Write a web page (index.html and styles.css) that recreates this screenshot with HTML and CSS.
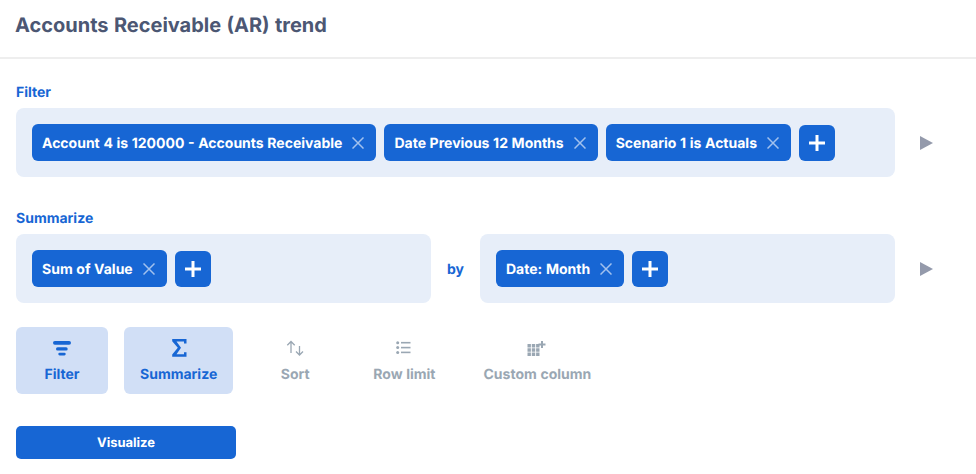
FILE: index.html
```html
<!DOCTYPE html>
<html lang="en">
<head>
<meta charset="utf-8">
<title>Accounts Receivable (AR) trend</title>
<link rel="stylesheet" href="styles.css">
</head>
<body>
<header class="header"><h1 class="title">Accounts Receivable (AR) trend</h1></header>
<main class="content">
  <section class="section">
    <div class="label">Filter</div>
    <div class="row">
      <div class="panel">
        <div class="chip"><span>Account 4 is 120000 - Accounts Receivable</span><svg class="x" viewBox="0 0 12 12"><path d="M.5.5l11 11M11.500.5l-11 11"/></svg></div>
        <div class="chip"><span>Date Previous 12 Months</span><svg class="x" viewBox="0 0 12 12"><path d="M.5.5l11 11M11.500.5l-11 11"/></svg></div>
        <div class="chip"><span>Scenario 1 is Actuals</span><svg class="x" viewBox="0 0 12 12"><path d="M.5.5l11 11M11.500.5l-11 11"/></svg></div>
        <div class="add"><svg class="plus" viewBox="0 0 16 16"><path d="M8 0v16M0 8h16"/></svg></div>
      </div>
      <svg class="run" viewBox="0 0 13 14"><path d="M0 0l13 7-13 7z"/></svg>
    </div>
  </section>
  <section class="section summarize">
    <div class="label">Summarize</div>
    <div class="row">
      <div class="panel half">
        <div class="chip"><span>Sum of Value</span><svg class="x" viewBox="0 0 12 12"><path d="M.5.5l11 11M11.500.5l-11 11"/></svg></div>
        <div class="add"><svg class="plus" viewBox="0 0 16 16"><path d="M8 0v16M0 8h16"/></svg></div>
      </div>
      <div class="by">by</div>
      <div class="panel half">
        <div class="chip"><span>Date: Month</span><svg class="x" viewBox="0 0 12 12"><path d="M.5.5l11 11M11.500.5l-11 11"/></svg></div>
        <div class="add"><svg class="plus" viewBox="0 0 16 16"><path d="M8 0v16M0 8h16"/></svg></div>
      </div>
      <svg class="run" viewBox="0 0 13 14"><path d="M0 0l13 7-13 7z"/></svg>
    </div>
  </section>
  <div class="tools">
    <div class="tool active">
      <svg class="ticon" viewBox="0 0 20 20"><rect x="1" y="3" width="18" height="3.700" rx="1.850"/><rect x="4" y="9.300" width="11.700" height="3.200" rx="1.600"/><rect x="6.300" y="14.700" width="7.400" height="2.700" rx="1.350"/></svg>
      <span>Filter</span>
    </div>
    <div class="tool active">
      <svg class="ticon" viewBox="0 0 20 20"><path d="M3.200 1H17.500V5.500H15V3.500H7.500L12 9.800 7.500 16.200H15V14.200H17.500V18.700H3.200V16.500L8.800 9.800 3.200 3.200z"/></svg>
      <span>Summarize</span>
    </div>
    <div class="tool">
      <svg class="ticon line" viewBox="0 0 20 20"><path d="M6 15V3.500M2.300 7.200L6 3.500l3.700 3.700M14.500 8V17M11 13.500l3.500 3.500 3.500-3.500"/></svg>
      <span>Sort</span>
    </div>
    <div class="tool">
      <svg class="ticon" viewBox="0 0 20 20"><circle cx="3.700" cy="4.700" r="1.500"/><circle cx="3.700" cy="9.600" r="1.500"/><circle cx="3.700" cy="14.400" r="1.500"/><rect x="7" y="3.900" width="9.500" height="1.600"/><rect x="7" y="8.800" width="9.500" height="1.600"/><rect x="7" y="13.600" width="9.500" height="1.600"/></svg>
      <span>Row limit</span>
    </div>
    <div class="tool">
      <svg class="ticon" viewBox="0 0 20 20"><path d="M.5 6h3.400v3.400H.5zM4.800 6h3.400v3.400H4.800zM9.100 6h3.400v3.400H9.100zM.5 10.300h3.400v3.400H.5zM4.800 10.300h3.400v3.400H4.800zM9.100 10.300h3.400v3.400H9.100zM.5 14.600h3.400V18H.5zM4.800 14.600h3.400V18H4.800zM9.100 14.600h3.400V18H9.100z"/><path d="M14 3h2v2.500h2.500v2H16V10h-2V7.500h-2.500v-2H14z"/></svg>
      <span>Custom column</span>
    </div>
  </div>
  <button class="visualize" type="button">Visualize</button>
</main>
</body>
</html>
```
FILE: styles.css
```css
* { box-sizing: border-box; }
html, body { margin: 0; padding: 0; }
body {
  width: 976px;
  height: 474px;
  overflow: hidden;
  background: #fff;
  font-family: Inter, "Liberation Sans", sans-serif;
  font-weight: 700;
  color: #1766d4;
  text-rendering: geometricPrecision;
  word-spacing: 0.02em;
}
.header {
  height: 59px;
  padding: 0 16px;
  display: flex;
  align-items: center;
  border-bottom: 2px solid #eeeeee;
}
.title {
  margin: 0 0 8px -1px;
  font-size: 20px;
  line-height: 24px;
  font-weight: 700;
  color: #4c5773;
  word-spacing: 0.03em;
}
.content { padding: 25px 16px 0; }
.section { height: 93px; }
.summarize { margin-top: 33px; }
.label { font-size: 14px; line-height: 16px; height: 24px; padding-top: 1px; }
.row { display: flex; align-items: center; }
.panel {
  width: 879px;
  height: 69px;
  padding: 16px;
  display: flex;
  align-items: flex-end;
  gap: 8px;
  background: #e7eef9;
  border-radius: 8px;
}
.panel.half { width: 415px; }
.by { width: 49px; padding-top: 1px; font-size: 14px; text-align: center; }
.chip {
  height: 37px;
  padding: 1px 12px 0 10px;
  display: flex;
  align-items: center;
  gap: 10px;
  background: #1766d4;
  color: #fff;
  font-size: 14px;
  border-radius: 6px;
  white-space: nowrap;
}
.x { width: 12px; height: 12px; margin-top: -1px; fill: none; stroke: #a2c1ee; stroke-width: 1.500; }
.add {
  width: 36px;
  height: 36px;
  display: flex;
  align-items: center;
  justify-content: center;
  background: #1766d4;
  border-radius: 6px;
}
.plus { width: 16px; height: 16px; fill: none; stroke: #fff; stroke-width: 3; }
.run { width: 13px; height: 14px; margin-left: 25px; fill: #949aab; }
.tools { display: flex; gap: 16px; margin-top: 24px; }
.tool {
  min-width: 92px;
  height: 67px;
  padding: 11px 16px 0;
  display: flex;
  flex-direction: column;
  align-items: center;
  border-radius: 6px;
  color: #9aa7b3;
  font-size: 14px;
  line-height: 16px;
  white-space: nowrap;
}
.tool.active { background: #d1dff6; color: #1766d4; }
.ticon { width: 20px; height: 20px; margin-bottom: 9px; fill: currentColor; }
.ticon.line { fill: none; stroke: currentColor; stroke-width: 1.300; }
.visualize {
  display: block;
  width: 220px;
  height: 33px;
  margin-top: 32px;
  padding: 1px 0 0;
  border: 0;
  border-radius: 5px;
  background: #1766d4;
  color: #fff;
  font: 700 13px/1 Inter, "Liberation Sans", sans-serif;
  text-rendering: geometricPrecision;
}
```
